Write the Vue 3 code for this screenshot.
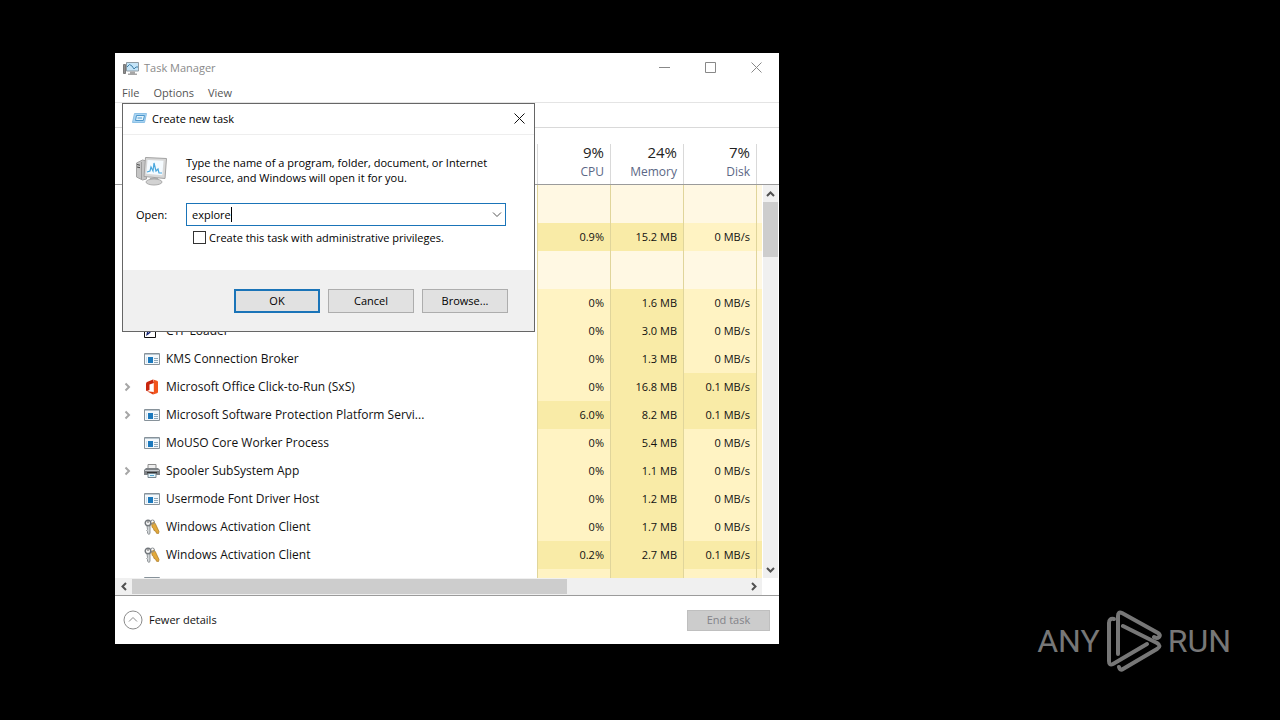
<script setup>
  import { ref } from "vue"

  const command = ref("explore")
  const elevated = ref(false)

  const columns = [
    { total: "9%", label: "CPU" },
    { total: "24%", label: "Memory" },
    { total: "7%", label: "Disk" }
  ]

  // heat: one level per value column, plus the sliver of the next one
  const rows = [
    { group: true },
    { values: ["0.9%", "15.2 MB", "0 MB/s"], heat: [2, 2, 1, 1] },
    { group: true },
    { values: ["0%", "1.6 MB", "0 MB/s"], heat: [1, 2, 1, 1] },
    { name: "CTF Loader", icon: "ctf", values: ["0%", "3.0 MB", "0 MB/s"], heat: [1, 2, 1, 1] },
    { name: "KMS Connection Broker", icon: "app", values: ["0%", "1.3 MB", "0 MB/s"], heat: [1, 2, 1, 1] },
    { name: "Microsoft Office Click-to-Run (SxS)", icon: "office", expandable: true, values: ["0%", "16.8 MB", "0.1 MB/s"], heat: [1, 2, 2, 1] },
    { name: "Microsoft Software Protection Platform Servi...", icon: "app", expandable: true, values: ["6.0%", "8.2 MB", "0.1 MB/s"], heat: [2, 2, 2, 1] },
    { name: "MoUSO Core Worker Process", icon: "app", values: ["0%", "5.4 MB", "0 MB/s"], heat: [1, 2, 1, 1] },
    { name: "Spooler SubSystem App", icon: "printer", expandable: true, values: ["0%", "1.1 MB", "0 MB/s"], heat: [1, 2, 1, 1] },
    { name: "Usermode Font Driver Host", icon: "app", values: ["0%", "1.2 MB", "0 MB/s"], heat: [1, 2, 1, 1] },
    { name: "Windows Activation Client", icon: "keys", values: ["0%", "1.7 MB", "0 MB/s"], heat: [1, 2, 1, 1] },
    { name: "Windows Activation Client", icon: "keys", values: ["0.2%", "2.7 MB", "0.1 MB/s"], heat: [2, 2, 2, 2] },
    { icon: "app", values: ["", "", ""], heat: [1, 2, 1, 1] }
  ]
</script>

<template>
  <main class="desktop">
    <section class="window">
      <header class="title-bar">
        <svg width="16" height="16" viewBox="0 0 16 16">
          <path d="M.5 4.500h2v9h-2z" fill="#8d8d8d" stroke="#777" />
          <path d="M3.500 2.500h12v8.500h-12z" fill="#c3e4f8" stroke="#8f9ba3" />
          <path d="M4 7l2.500-2.500L9 6l2 3 2-2h2" fill="none" stroke="#3f7fa8" />
          <path d="M7 11.500h5v2H7zM5 13.500h9V15H5z" fill="#a6a6a6" />
        </svg>
        <h1>Task Manager</h1>
        <button class="caption-button" aria-label="Minimize">
          <svg width="11" height="11" viewBox="0 0 11 11"><path d="M0 5.500h11" /></svg>
        </button>
        <button class="caption-button" aria-label="Maximize">
          <svg width="11" height="11" viewBox="0 0 11 11"><path d="M.5.5h10v10H.5z" /></svg>
        </button>
        <button class="caption-button" aria-label="Close">
          <svg width="11" height="11" viewBox="0 0 11 11"><path d="M.5.5l10 10M10.500.5l-10 10" /></svg>
        </button>
      </header>

      <nav class="menu">
        <button>File</button>
        <button>Options</button>
        <button>View</button>
      </nav>
      <div class="tab-strip"></div>

      <div class="processes">
        <div class="table-pane">
          <table>
            <colgroup>
              <col />
              <col class="value-col" span="3" />
              <col class="edge-col" />
            </colgroup>
            <thead>
              <tr>
                <th></th>
                <th v-for="column in columns" :key="column.label" scope="col">
                  <div class="column-head">
                    <span class="total">{{ column.total }}</span>
                    <span>{{ column.label }}</span>
                  </div>
                </th>
                <th><div class="column-head"></div></th>
              </tr>
            </thead>
            <tbody>
              <tr v-for="(row, i) in rows" :key="i" :class="{ group: row.group }">
                <template v-if="row.group">
                  <td></td>
                  <td v-for="n in 4" :key="n" class="heat-0"></td>
                </template>
                <template v-else>
                  <td>
                    <div class="process">
                      <button v-if="row.expandable" class="expander" aria-label="Expand">
                        <svg width="7" height="10" viewBox="0 0 7 10"><path d="M1.500 1.500L5 5 1.500 8.500" /></svg>
                      </button>
                      <svg v-if="row.icon" class="process-icon" width="16" height="16" viewBox="0 0 16 16">
                        <g v-if="row.icon === 'app'">
                          <path d="M.5 2.500h15v11H.5z" fill="#f4f8fb" stroke="#87929a" />
                          <path d="M1 3h14v1H1z" fill="#b9c6cf" />
                          <path d="M4 6h5v6H4z" fill="#1c79bd" />
                          <path d="M2 6h1v6H2z" fill="#cfe2f0" />
                          <path d="M10 7.500h4M10 9.500h4M10 11.500h4" stroke="#8fa8ba" />
                        </g>
                        <g v-else-if="row.icon === 'office'">
                          <path d="M9 .5L3 3Q2 3.500 2 5v6q0 1.200 1 1l2.500-1V5.500L10 4z" fill="#c8250d" />
                          <path d="M9 .5l4 1.200q1 .3 1 1.500v9.600q0 1.200-1 1.500L9 15.500q.8-.5.8-1.500V2Q9.800 1 9 .5z" fill="#f2541b" />
                          <path d="M3 12.200L9.800 13v1q0 1-.8 1.500z" fill="#e03c10" />
                        </g>
                        <g v-else-if="row.icon === 'printer'">
                          <path d="M4 1.500h8v4H4z" fill="#eee" stroke="#8d8d8d" />
                          <path d="M2 5h12l2 2v5H0V7z" fill="#7d8185" />
                          <path d="M1 7.500h14" stroke="#c9cdd0" />
                          <path d="M3 9h10v1.500H3z" fill="#333" />
                          <path d="M4 10.500h8v4H4z" fill="#e1f2fa" stroke="#77868f" />
                          <path d="M6 12.500h4" stroke="#54a6cf" />
                        </g>
                        <g v-else-if="row.icon === 'keys'">
                          <path d="M7.500 4.500L10 3l1.500 2 3.500 7.500-.5 2-2-.2-1-2.300-1.500-.5-.5-2-1.300-1z" fill="#e2a93b" stroke="#a8741d" stroke-width=".7" />
                          <circle cx="8.500" cy="3" r="2" fill="none" stroke="#8b8f93" />
                          <circle cx="4" cy="4" r="2.800" fill="#f4f4f4" stroke="#71767b" stroke-width="1.400" />
                          <circle cx="4" cy="3" r=".8" fill="#555" />
                          <path d="M3 7h3v7.500l-1.300 1L3.500 14v-1.500l-.8-1 .8-1z" fill="#d3d7da" stroke="#787d82" stroke-width=".8" />
                        </g>
                        <g v-else>
                          <path d="M.5 2.500h11v12H.5z" fill="#fff" stroke="#111" />
                          <path d="M2 13l1-4 7-7 2 2-7 7z" fill="#17246f" />
                          <path d="M4 10l5-5" stroke="#7c8ed4" />
                        </g>
                      </svg>
                      <span>{{ row.name }}</span>
                    </div>
                  </td>
                  <td v-for="(value, c) in row.values" :key="c" :class="`heat-${row.heat[c]}`">{{ value }}</td>
                  <td :class="`heat-${row.heat[3]}`"></td>
                </template>
              </tr>
            </tbody>
          </table>
        </div>

        <div class="scroll-y">
          <div class="scroll-head"></div>
          <button aria-label="Scroll up">
            <svg width="9" height="6" viewBox="0 0 9 6"><path d="M1 5l3.500-3.500L8 5" /></svg>
          </button>
          <div class="track"><div class="thumb"></div></div>
          <button aria-label="Scroll down">
            <svg width="9" height="6" viewBox="0 0 9 6"><path d="M1 1l3.500 3.500L8 1" /></svg>
          </button>
        </div>

        <div class="scroll-x">
          <button aria-label="Scroll left">
            <svg width="6" height="9" viewBox="0 0 6 9"><path d="M5 1L1.500 4.500 5 8" /></svg>
          </button>
          <div class="track"><div class="thumb"></div></div>
          <button aria-label="Scroll right">
            <svg width="6" height="9" viewBox="0 0 6 9"><path d="M1 1l3.500 3.500L1 8" /></svg>
          </button>
        </div>
      </div>

      <footer class="status">
        <button class="details">
          <svg width="20" height="20" viewBox="0 0 20 20">
            <circle cx="10" cy="10" r="9" />
            <path d="M6 11.500l4-4 4 4" />
          </svg>
          Fewer details
        </button>
        <button class="end-task" disabled>End task</button>
      </footer>

      <form class="dialog" @submit.prevent>
        <header class="dialog-title">
          <svg width="16" height="16" viewBox="0 0 16 16">
            <path d="M3.500 2.500h12l-2 9H1.500z" fill="#a9d4f2" stroke="#8dc1e6" />
            <path d="M5.500 4.500h8l-1.200 5H4.500z" fill="#e3f3fc" stroke="#4d97cc" />
            <path d="M6.500 7h4.500" stroke="#4d97cc" />
          </svg>
          <h2>Create new task</h2>
          <button type="button" class="dialog-close" aria-label="Close">
            <svg width="11" height="11" viewBox="0 0 11 11"><path d="M.5.5l10 10M10.500.5l-10 10" /></svg>
          </button>
        </header>

        <div class="dialog-body">
          <svg width="32" height="32" viewBox="0 0 32 32">
            <path d="M.5 8l6-3 4 1v18l-4 1-6-3z" fill="#c5c5c5" stroke="#a2a2a2" />
            <path d="M1 9.500l3 .7M1 12l3 .7" stroke="#4c4c4c" />
            <path d="M5.500 7v17" stroke="#9c9c9c" />
            <path d="M14 23h8l1 4H13z" fill="#aaa" />
            <ellipse cx="18" cy="27" rx="8" ry="3" fill="#d2d2d2" stroke="#ababab" />
            <path d="M9.500 2.500l21 1-1.500 20L8 21.500z" fill="#d8d8d8" stroke="#a2a2a2" />
            <path d="M11.500 5l16 .8-1.200 14.500-16-1.500z" fill="#f5fbff" />
            <path d="M11 17l3-1 1-4 2 4 1-8 2 8 2-2 1 4h3" fill="none" stroke="#4aa8de" stroke-width="1.200" />
          </svg>
          <p>Type the name of a program, folder, document, or Internet<br />resource, and Windows will open it for you.</p>

          <label for="command">Open:</label>
          <div class="combo">
            <input id="command" v-model="command" type="text" autocomplete="off" />
            <span class="caret"></span>
            <button type="button" aria-label="Show recent">
              <svg width="10" height="6" viewBox="0 0 10 6"><path d="M1 .5l4 4 4-4" /></svg>
            </button>
          </div>

          <div class="privileges">
            <input id="elevated" v-model="elevated" type="checkbox" />
            <label for="elevated">Create this task with administrative privileges.</label>
          </div>
        </div>

        <footer class="dialog-actions">
          <button class="default">OK</button>
          <button type="button">Cancel</button>
          <button type="button">Browse...</button>
        </footer>
      </form>
    </section>

    <div class="watermark">
      <span>ANY</span>
      <svg width="56" height="62" viewBox="0 0 56 62">
        <path d="M12 44V6q0-5 4-3l36 20q3 2 1 4-2 2-5 0" />
        <path d="M8 9Q3 8 3 13v38q0 5 4 3L41 34" />
        <path d="M17 16l34 17q5 3 0 6L17 59q-3 2-4-2" />
      </svg>
      <span>RUN</span>
    </div>
  </main>
</template>

<style>
  body {
    margin: 0;
    background: #000;
  }
</style>

<style scoped>
  .desktop {
    position: relative;
    box-sizing: border-box;
    display: flex;
    flex-direction: column;
    height: 100vh;
    padding: 53px 501px 76px 115px;
    background: #000;
    color: #111;
    font: 11px/16px "Open Sans", "Noto Sans", sans-serif;
  }

  button,
  input {
    font: inherit;
    color: inherit;
  }

  button {
    padding: 0;
    border: 0;
    background: none;
  }

  h1,
  h2,
  p {
    margin: 0;
    font: inherit;
  }

  svg {
    display: block;
    flex: none;
  }

  .window {
    position: relative;
    flex: 1;
    min-height: 0;
    display: flex;
    flex-direction: column;
    background: #fff;
  }

  .title-bar {
    display: flex;
    align-items: center;
    height: 30px;
    padding-left: 8px;
    color: #8a8a8a;

    h1 {
      flex: 1;
      margin-left: 5px;
    }
  }

  .caption-button {
    align-self: start;
    width: 46px;
    height: 28px;
    display: grid;
    place-items: center;

    svg {
      fill: none;
      stroke: #888;
    }
  }

  .menu {
    display: flex;
    gap: 14px;
    height: 19px;
    padding-left: 7px;
    border-bottom: 1px solid #e4e4e4;
    color: #555;
  }

  .tab-strip {
    height: 24px;
    border-bottom: 1px solid #d9d9d9;
  }

  .processes {
    flex: 1;
    min-height: 0;
    display: grid;
    grid-template-columns: 1fr 17px;
    grid-template-rows: 1fr 17px;
  }

  .table-pane {
    min-height: 0;
    overflow: hidden;
  }

  table {
    width: 100%;
    table-layout: fixed;
    border-spacing: 0;
    font-size: 12px;
  }

  .value-col {
    width: 73px;
  }

  .edge-col {
    width: 6px;
  }

  th {
    height: 56px;
    padding: 0;
    border-bottom: 1px solid #9b9b9b;
    vertical-align: bottom;
    font-weight: normal;
  }

  .column-head {
    box-sizing: border-box;
    display: flex;
    flex-direction: column;
    gap: 4px;
    height: 40px;
    padding-right: 6px;
    border-left: 1px solid #d9d9d9;
    text-align: right;
    color: #5b6785;

    .total {
      font-size: 15px;
      color: #222;
    }
  }

  td {
    box-sizing: border-box;
    height: 28px;
    padding: 0;
    white-space: nowrap;

    &:not(:first-child) {
      padding-right: 6px;
      border-left: 1px solid #e0d59b;
      text-align: right;
      font-size: 11px;
    }

    &:last-child {
      padding: 0;
    }
  }

  .group td {
    height: 38px;
  }

  .heat-0 {
    background: #fff8e3;
  }

  .heat-1 {
    background: #fff3c3;
  }

  .heat-2 {
    background: #f9eba7;
  }

  .process {
    display: grid;
    grid-template-columns: 20px 16px 1fr;
    align-items: center;
    padding-left: 9px;

    span {
      grid-column: 3;
      margin-left: 6px;
    }
  }

  .process-icon {
    grid-column: 2;
  }

  .expander {
    grid-column: 1;
    justify-self: start;

    svg {
      fill: none;
      stroke: #a6a6a6;
      stroke-width: 2;
    }
  }

  .scroll-y,
  .scroll-x {
    display: flex;

    button {
      width: 17px;
      height: 17px;
      display: grid;
      place-items: center;
      background: #f0f0f0;
    }

    svg {
      fill: none;
      stroke: #505050;
      stroke-width: 2;
    }

    .track {
      flex: 1;
      background: #f0f0f0;
    }

    .thumb {
      background: #cdcdcd;
    }
  }

  .scroll-y {
    flex-direction: column;

    .scroll-head {
      height: 56px;
      border-bottom: 1px solid #9b9b9b;
    }

    button,
    .track {
      margin: 0 1px;
      width: 15px;
    }

    .thumb {
      height: 55px;
    }
  }

  .scroll-x .thumb {
    width: 71%;
    height: 15px;
    margin: 1px 0;
  }

  .status {
    display: flex;
    align-items: center;
    justify-content: space-between;
    height: 48px;
    padding: 0 9px 0 8px;
    border-top: 1px solid #9b9b9b;
  }

  .details {
    display: flex;
    align-items: center;
    gap: 6px;

    svg {
      fill: none;
      stroke: #8b8b8b;
    }
  }

  .end-task {
    width: 83px;
    height: 21px;
    border: 1px solid #bfbfbf;
    background: #ccc;
    color: #838389;
  }

  .dialog {
    position: absolute;
    top: 50px;
    left: 7px;
    box-sizing: border-box;
    width: 413px;
    border: 1px solid #666;
    background: #fff;
    color: #000;
  }

  .dialog-title {
    display: flex;
    align-items: center;
    height: 30px;
    padding-left: 8px;
    border-bottom: 1px solid #eee;

    h2 {
      flex: 1;
      margin-left: 5px;
    }
  }

  .dialog-close {
    align-self: start;
    width: 30px;
    height: 28px;
    display: grid;
    place-items: center;

    svg {
      fill: none;
      stroke: #111;
    }
  }

  .dialog-body {
    display: grid;
    grid-template-columns: 50px 1fr;
    align-items: center;
    padding: 20px 28px 25px 13px;

    p {
      align-self: start;
      line-height: 15px;
      white-space: nowrap;
    }
  }

  .dialog-body > label,
  .combo {
    margin-top: 16px;
  }

  .combo {
    box-sizing: border-box;
    display: flex;
    align-items: center;
    height: 23px;
    padding: 0 3px 0 5px;
    border: 1px solid #1a74b8;

    input {
      field-sizing: content;
      padding: 0;
      border: 0;
      outline: 0;
      background: none;
    }

    button {
      margin-left: auto;
    }

    svg {
      fill: none;
      stroke: #555;
    }
  }

  .caret {
    width: 1px;
    height: 15px;
    background: #000;
  }

  .privileges {
    grid-column: 2;
    display: flex;
    align-items: center;
    gap: 3px;
    height: 15px;
    margin-top: 4px;
    padding-left: 7px;

    input {
      appearance: none;
      box-sizing: border-box;
      width: 13px;
      height: 13px;
      margin: 0;
      border: 1px solid #333;
      background: #fff;
    }
  }

  .dialog-actions {
    display: flex;
    justify-content: flex-end;
    gap: 8px;
    padding: 19px 26px 18px;
    background: #f0f0f0;

    button {
      width: 86px;
      height: 24px;
      border: 1px solid #adadad;
      background: #e1e1e1;
    }

    .default {
      border: 2px solid #1a74b8;
    }
  }

  .watermark {
    position: absolute;
    right: 49px;
    bottom: 48px;
    display: flex;
    align-items: center;
    gap: 6px;
    color: #777;
    font: 32px/62px Roboto, "Liberation Sans", sans-serif;

    svg {
      fill: none;
      stroke: #777;
      stroke-width: 4;
      stroke-linecap: round;
    }
  }
</style>
